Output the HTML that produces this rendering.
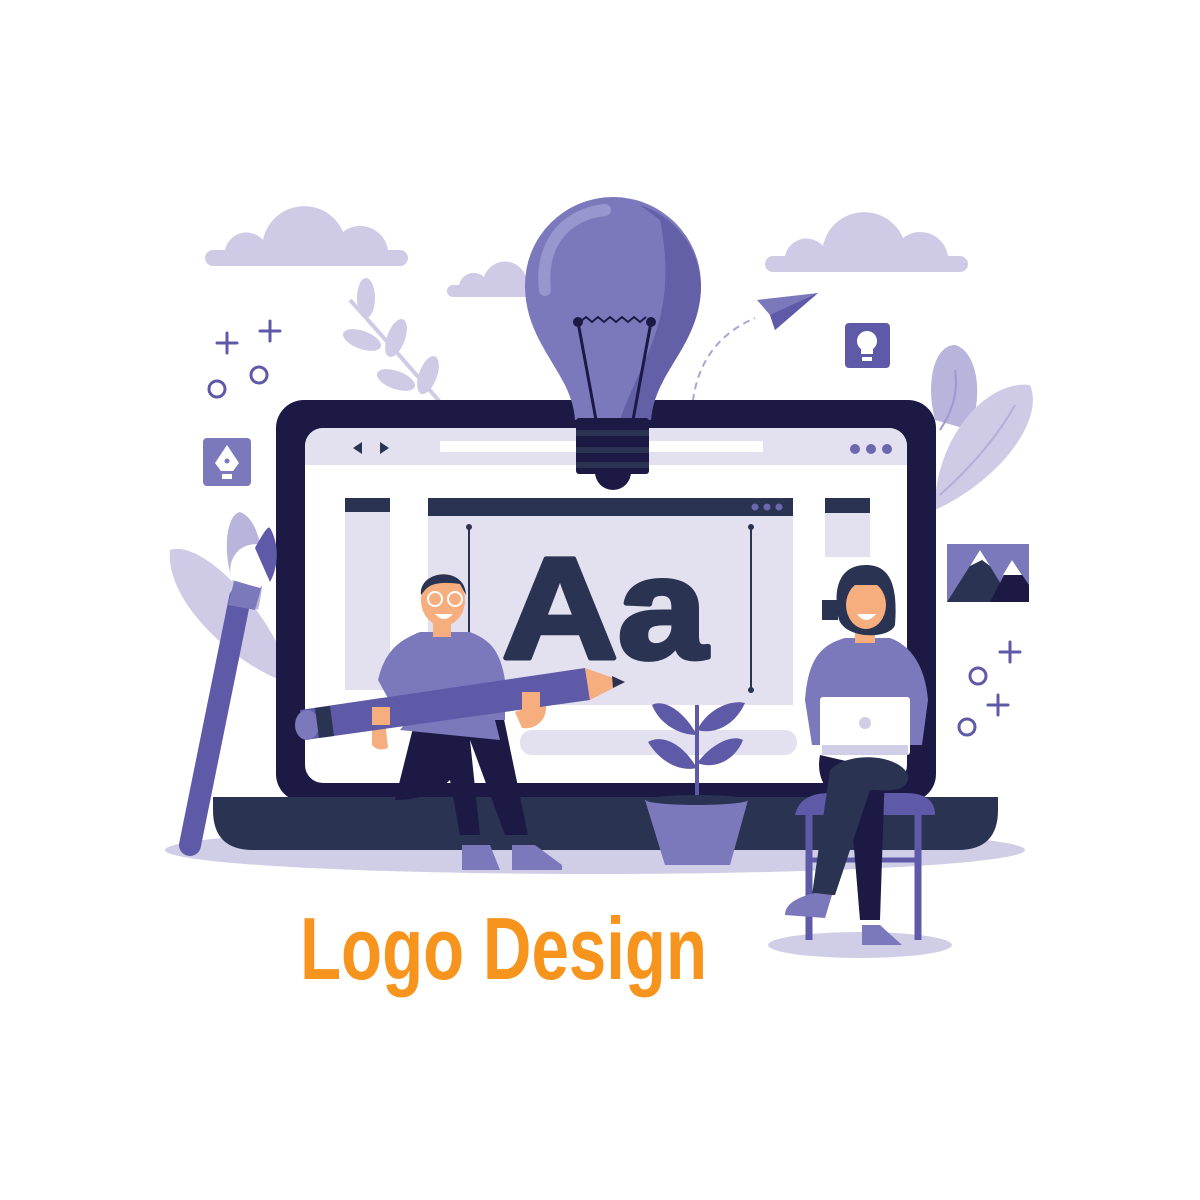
<!DOCTYPE html>
<html><head><meta charset="utf-8"><style>html,body{margin:0;padding:0;background:#fff}svg{display:block}</style></head>
<body>
<svg width="1200" height="1200" viewBox="0 0 1200 1200" xmlns="http://www.w3.org/2000/svg">
<rect width="1200" height="1200" fill="#fff"/>
<g fill="#cfcbe6">
<path d="M213 266 a8 8 0 0 1 0-16 h12 a22 22 0 0 1 38-10 a42 42 0 0 1 80-8 a28 28 0 0 1 45 18 h12 a8 8 0 0 1 0 16 Z"/>
<path d="M773 272 a8 8 0 0 1 0-16 h12 a22 22 0 0 1 38-10 a42 42 0 0 1 80-8 a28 28 0 0 1 45 18 h12 a8 8 0 0 1 0 16 Z"/>
<path d="M453 297 a6 6 0 0 1 0-12 h6 a15 15 0 0 1 25-8 a22 22 0 0 1 42 0 v20 Z"/>
</g>
<g fill="#cfcbe6">
<path d="M350 300 Q395 350 440 402" stroke="#cfcbe6" stroke-width="4" fill="none"/>
<ellipse cx="366" cy="298" rx="9" ry="20"/>
<ellipse cx="362" cy="340" rx="20" ry="9" transform="rotate(20 362 340)"/>
<ellipse cx="396" cy="338" rx="9" ry="20" transform="rotate(20 396 338)"/>
<ellipse cx="396" cy="380" rx="20" ry="9" transform="rotate(20 396 380)"/>
<ellipse cx="428" cy="375" rx="9" ry="20" transform="rotate(20 428 375)"/>
</g>
<path d="M935 420 C925 380 935 345 955 345 C975 350 985 390 970 430 Z" fill="#b8b4dc"/>
<path d="M935 500 C940 430 990 380 1030 385 C1045 420 1000 480 935 510 Z" fill="#cfcbe6"/>
<path d="M940 430 Q960 400 955 370" stroke="#9d99cf" stroke-width="2" fill="none"/>
<path d="M940 495 Q990 450 1015 405" stroke="#b3afd9" stroke-width="2" fill="none"/>
<path d="M280 680 C230 660 165 600 170 550 C200 540 260 600 285 660 Z" fill="#cfcbe6"/>
<path d="M240 600 C220 560 225 515 240 512 C262 520 268 570 258 610 Z" fill="#b8b4dc"/>
<g stroke="#5e5aa8" stroke-width="3" fill="none" stroke-linecap="round">
<path d="M227 333v20M217 343h20M270 321v20M260 331h20"/>
<circle cx="217" cy="389" r="8"/><circle cx="259" cy="375" r="8"/>
<path d="M1010 642v20M1000 652h20M998 695v20M988 705h20"/>
<circle cx="978" cy="676" r="8"/><circle cx="967" cy="727" r="8"/>
</g>
<rect x="845" y="323" width="45" height="45" rx="4" fill="#5e5aa8"/>
<path d="M867 331 a10 10 0 0 1 6 18 v5 h-12 v-5 a10 10 0 0 1 6-18Z M862 357h10v4h-10z" fill="#fff"/>
<rect x="203" y="438" width="48" height="48" rx="4" fill="#7b79bb"/>
<path d="M227 445 l12 18 l-6 8 h-12 l-6-8 Z M222 474h10v5h-10z" fill="#fff"/>
<circle cx="227" cy="461" r="2.5" fill="#7b79bb"/>
<rect x="947" y="544" width="82" height="58" fill="#7b79bb"/>
<path d="M947 602 L980 550 L1012 602Z" fill="#2a3352"/>
<path d="M990 602 L1012 560 L1029 585 V602Z" fill="#1c1a45"/>
<path d="M970 566 L980 550 L990 566 L982 560Z M1003 575 L1012 560 L1022 575Z" fill="#fff"/>
<path d="M692 425 C690 370 715 335 755 318" stroke="#a9a5d4" stroke-width="2" stroke-dasharray="7 5" fill="none"/>
<path d="M757 300 L818 293 L775 330 L770 315Z" fill="#7b79bb"/>
<path d="M770 315 L818 293 L775 330Z" fill="#5e5aa8"/>
<ellipse cx="595" cy="850" rx="430" ry="24" fill="#d0cde6"/>
<rect x="276" y="400" width="660" height="402" rx="28" fill="#1c1a45"/>
<rect x="305" y="428" width="602" height="355" rx="18" fill="#fff"/>
<path d="M305 465 V446 a18 18 0 0 1 18-18 H889 a18 18 0 0 1 18 18 V465Z" fill="#e3e1f0"/>
<rect x="440" y="441" width="323" height="11" fill="#fff"/>
<path d="M353 448 l9-6 v12Z M389 448 l-9-6 v12Z" fill="#2a3352"/>
<g fill="#6b68b0"><circle cx="855" cy="449" r="5"/><circle cx="871" cy="449" r="5"/><circle cx="887" cy="449" r="5"/></g>
<rect x="345" y="498" width="45" height="14" fill="#2a3352"/>
<rect x="345" y="512" width="45" height="178" fill="#e3e1f0"/>
<rect x="428" y="498" width="365" height="18" fill="#2a3352"/>
<rect x="428" y="516" width="365" height="189" fill="#e3e1f0"/>
<g fill="#6b68b0"><circle cx="755" cy="507" r="3.5"/><circle cx="767" cy="507" r="3.5"/><circle cx="779" cy="507" r="3.5"/></g>
<rect x="825" y="498" width="45" height="15" fill="#2a3352"/>
<rect x="825" y="513" width="45" height="44" fill="#e3e1f0"/>
<g stroke="#2a3352" stroke-width="2"><path d="M469 527V690M751 527V690"/></g>
<g fill="#2a3352"><circle cx="469" cy="527" r="3"/><circle cx="469" cy="690" r="3"/><circle cx="751" cy="527" r="3"/><circle cx="751" cy="690" r="3"/></g>
<text x="502" y="658" font-family="Liberation Sans, sans-serif" font-weight="bold" font-size="144" fill="#2a3352" stroke="#2a3352" stroke-width="5" stroke-linejoin="round" textLength="205" lengthAdjust="spacingAndGlyphs">Aa</text>
<rect x="822" y="600" width="16" height="20" fill="#2a3352"/>
<rect x="520" y="730" width="277" height="25" rx="12" fill="#e3e1f0"/>
<path d="M213 797 H998 V810 Q998 850 958 850 H253 Q213 850 213 810Z" fill="#2a3352"/>
<path d="M575 420 C572 372 525 345 525 285 A88 88 0 0 1 701 285 C701 345 654 372 651 420Z" fill="#7b79bb"/>
<path d="M640 205 A88 88 0 0 1 701 285 C701 345 654 372 651 420 H620 C640 360 680 320 660 220Z" fill="#6360a8"/>
<path d="M545 290 C540 250 560 215 605 210" stroke="#9896cf" stroke-width="12" stroke-linecap="round" fill="none"/>
<path d="M578 322 L596 420 M651 322 L633 420" stroke="#1c1a45" stroke-width="3"/>
<path d="M580 322 l6-5 l6 5 l6-5 l6 5 l6-5 l6 5 l6-5 l6 5 l6-5 l6 5 l6-5" stroke="#1c1a45" stroke-width="2" fill="none"/>
<circle cx="578" cy="322" r="5" fill="#1c1a45"/><circle cx="651" cy="322" r="5" fill="#1c1a45"/>
<ellipse cx="613" cy="472" rx="18" ry="18" fill="#1c1a45"/>
<rect x="576" y="418" width="73" height="56" rx="3" fill="#1c1a45"/>
<rect x="576" y="430" width="73" height="6" fill="#2a3352"/>
<rect x="576" y="447" width="73" height="6" fill="#2a3352"/>
<rect x="576" y="462" width="73" height="6" fill="#2a3352"/>
<path d="M190 845 L240 598" stroke="#5e5aa8" stroke-width="22" stroke-linecap="round"/>
<path d="M228 605 L255 610 L262 585 L235 578Z" fill="#7b79bb"/>
<path d="M232 580 C225 560 240 540 262 545 C272 560 268 580 260 588Z" fill="#fff"/>
<path d="M255 548 C262 535 268 525 270 528 C280 545 278 568 270 582 Z" fill="#5e5aa8"/>
<path d="M395 800 L420 700 L500 700 L528 835 H505 L470 740 L480 835 H460 L450 780 Q430 800 395 800Z" fill="#1c1a45"/>
<path d="M378 680 C385 650 400 640 420 632 H470 C490 640 500 650 505 680 L505 720 H400 Z" fill="#7b79bb"/>
<path d="M400 730 L425 700 H490 L500 740Z" fill="#7b79bb"/>
<rect x="433" y="615" width="18" height="22" fill="#f6ae7f"/>
<ellipse cx="443" cy="600" rx="22" ry="26" fill="#f6ae7f"/>
<path d="M421 595 C418 570 465 565 466 595 L460 584 C445 582 432 582 425 590Z" fill="#2a3352"/>
<g fill="none" stroke="#fff" stroke-width="2"><circle cx="435" cy="599" r="7"/><circle cx="455" cy="599" r="7"/></g>
<path d="M435 614 Q444 624 453 614Z" fill="#fff"/>
<path d="M372 720 L385 720 L388 748 Q378 752 372 745Z" fill="#f6ae7f"/>
<path d="M515 712 L545 700 C550 720 535 730 522 728Z" fill="#f6ae7f"/>
<path d="M300 710 L585 668 L590 700 L305 740 Z" fill="#5e5aa8"/>
<ellipse cx="307" cy="725" rx="12" ry="15" fill="#7b79bb"/>
<path d="M315 708 L330 706 L334 736 L319 738Z" fill="#2a3352"/>
<path d="M585 668 L625 682 L590 700Z" fill="#f6ae7f"/>
<path d="M612 676 L625 682 L613 688Z" fill="#2a3352"/>
<path d="M372 707 h18 v18 h-18z M522 692 h18 v18 h-18z" fill="#f6ae7f"/>
<path d="M462 845 L490 845 L500 870 H462Z" fill="#7b79bb"/>
<path d="M512 845 L535 845 L562 865 V870 H512Z" fill="#7b79bb"/>
<path d="M697 705 V800" stroke="#5e5aa8" stroke-width="4"/>
<g fill="#5e5aa8">
<path d="M697 735 C680 705 660 700 652 705 C660 725 680 735 697 735Z"/>
<path d="M697 730 C710 705 735 700 745 703 C735 725 715 735 697 730Z"/>
<path d="M697 768 C680 740 660 735 648 742 C660 762 680 772 697 768Z"/>
<path d="M697 763 C715 740 735 735 743 740 C735 760 715 770 697 763Z"/>
</g>
<path d="M645 800 H748 L730 865 H665Z" fill="#7b79bb"/>
<ellipse cx="697" cy="800" rx="51" ry="5" fill="#2a3352"/>
<ellipse cx="860" cy="945" rx="92" ry="13" fill="#d0cde6"/>
<path d="M795 815 Q800 793 830 793 H905 Q935 793 935 815Z" fill="#5e5aa8"/>
<path d="M809 815 V940 M918 815 V940" stroke="#5e5aa8" stroke-width="7"/>
<path d="M812 860 H918" stroke="#5e5aa8" stroke-width="5"/>
<path d="M820 755 C815 780 830 800 850 800 L860 920 H880 L885 770 Z" fill="#1c1a45"/>
<path d="M805 700 C808 660 820 645 845 638 H890 C910 645 925 665 928 700 L922 745 H812Z" fill="#7b79bb"/>
<rect x="855" y="628" width="20" height="15" fill="#f6ae7f"/>
<path d="M838 615 C832 580 845 565 866 565 C890 565 898 585 895 625 C890 640 840 640 838 615Z" fill="#2a3352"/>
<ellipse cx="866" cy="605" rx="20" ry="24" fill="#f6ae7f"/>
<path d="M845 595 C845 575 860 570 870 570 C885 572 890 585 888 595 L886 585 H848Z" fill="#2a3352"/>
<path d="M857 614 Q866 626 876 614Z" fill="#fff"/>
<rect x="820" y="697" width="90" height="58" rx="3" fill="#fff"/>
<rect x="822" y="745" width="86" height="10" fill="#d0cde6"/>
<circle cx="865" cy="723" r="6" fill="#d0cde6"/>
<path d="M830 770 C850 750 900 755 908 775 C910 795 880 790 870 790 L835 895 L812 895 Z" fill="#2a3352"/>
<path d="M815 893 L832 895 L825 918 L785 915 Q785 900 815 893Z" fill="#7b79bb"/>
<path d="M862 925 L880 925 L902 945 H862Z" fill="#7b79bb"/>
<text x="300" y="979" font-family="Liberation Sans, sans-serif" font-weight="bold" font-size="88" fill="#f7941d" textLength="407" lengthAdjust="spacingAndGlyphs">Logo Design</text>
</svg>
</body></html>
